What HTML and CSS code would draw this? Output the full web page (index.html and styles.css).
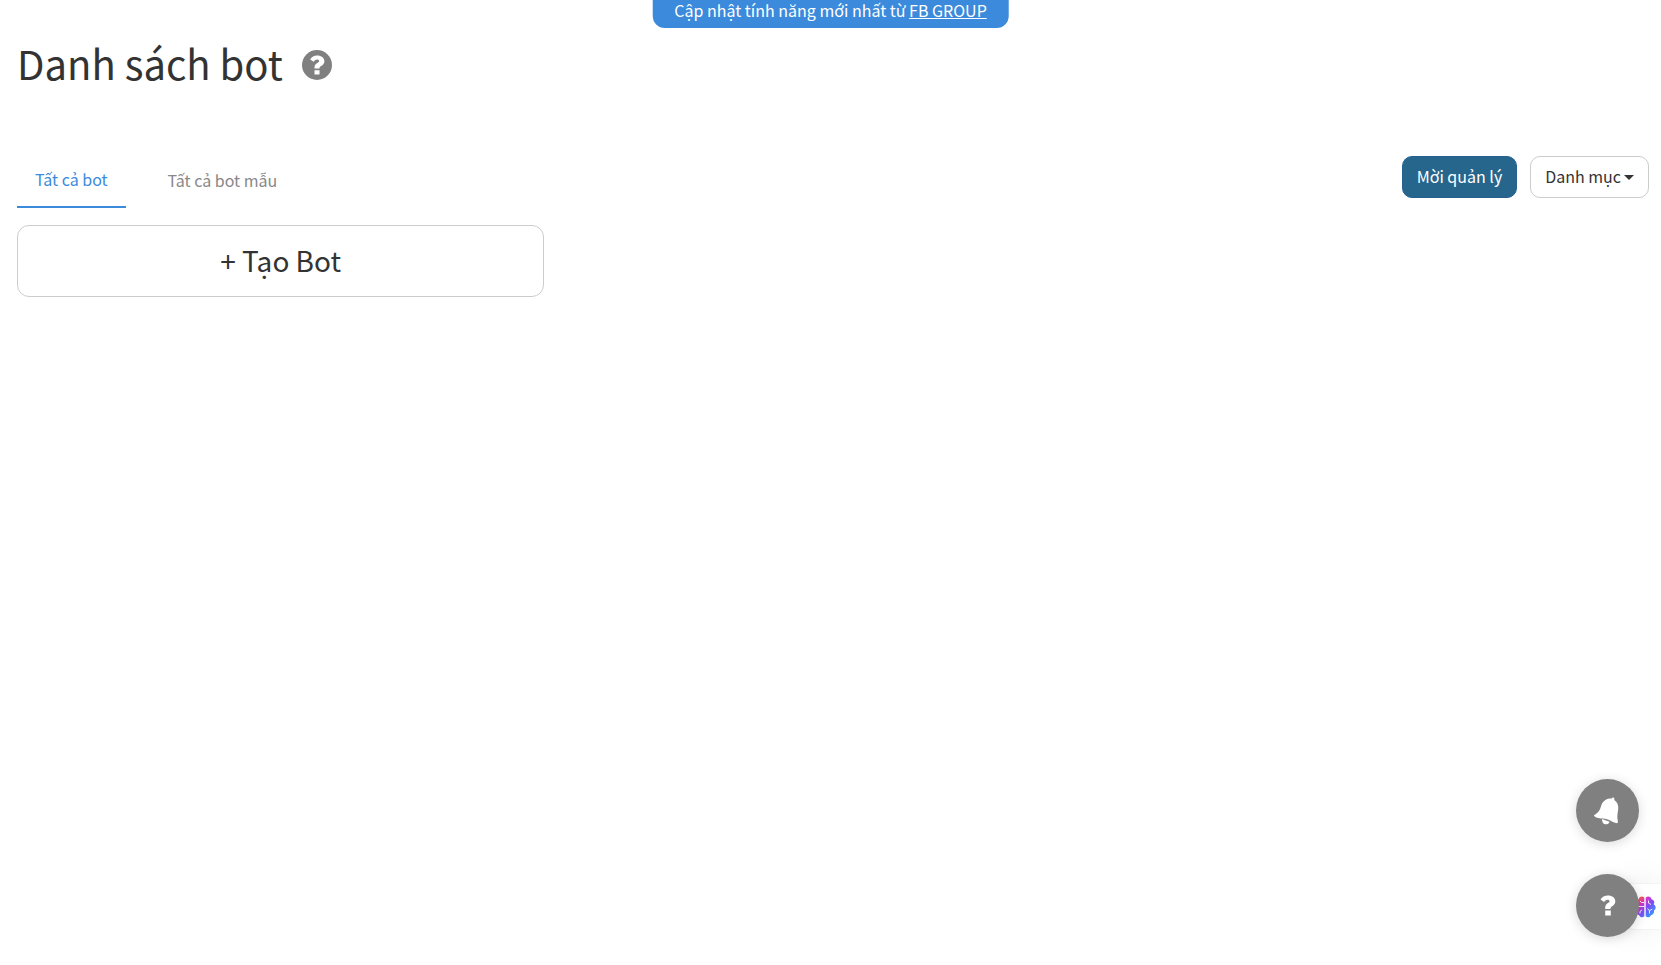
FILE: index.html
```
<!DOCTYPE html>
<html lang="vi">
<head>
<meta charset="utf-8">
<meta name="viewport" content="width=device-width, initial-scale=1">
<title>Danh sách bot</title>
<link rel="stylesheet" href="styles.css">
</head>
<body>
<div class="banner">Cập nhật tính năng mới nhất từ <a class="banner-link" href="#">FB GROUP</a></div>
<main class="page">
  <header class="heading">
    <h1 class="title">Danh sách bot</h1>
    <button class="help" type="button" aria-label="Trợ giúp">
      <svg viewBox="0 0 30 30" width="30" height="30"><circle cx="15" cy="15" r="15" fill="#808080"/><path d="M12.5 20.2h5v4.300h-5zM8.100 9.600C9.800 6.900 12 5.600 15.200 5.600c4 0 7.200 2.300 7.200 5.700 0 2.300-1.200 3.700-3.300 4.800-1.300.7-1.600 1.200-1.600 2.500h-5v-1c0-2.400 1-3.600 3-4.700 1.200-.7 1.700-1 1.700-1.800 0-.9-.9-1.500-2.100-1.500-1.500 0-2.300.7-3.300 2.100z" fill="#fff"/></svg>
    </button>
  </header>
  <div class="toolbar">
    <nav class="tabs">
      <a class="tab tab-active" href="#">Tất cả bot</a>
      <a class="tab" href="#">Tất cả bot mẫu</a>
    </nav>
    <div class="actions">
      <button class="btn btn-primary" type="button">Mời quản lý</button>
      <button class="btn" type="button">Danh mục<span class="caret"></span></button>
    </div>
  </div>
  <button class="create" type="button">+ Tạo Bot</button>
</main>
<button class="chip" type="button" aria-label="AI">
  <svg viewBox="0 0 22 22" width="22" height="22">
    <defs><linearGradient id="brain" gradientUnits="userSpaceOnUse" x1="2" y1="0" x2="20" y2="18"><stop offset="0" stop-color="#ff8a1a"/><stop offset=".2" stop-color="#f0506a"/><stop offset=".36" stop-color="#d836c8"/><stop offset=".62" stop-color="#7e4cf6"/><stop offset="1" stop-color="#2f9cff"/></linearGradient></defs>
    <path d="M10.300 1.500C8.200-.3 5 .6 4.700 3.200 2.200 3.700 1.200 6.200 2.500 8.200-.1 9.700 0 13.200 2.300 14.500c-.6 2.700 1 4.500 3 4.700.7 2.300 3.500 2.700 5 1zM11.700 1.500c2.100-1.800 5.500-.9 5.800 1.700 2.500.5 3.500 3 2.200 5 2.600 1.500 2.500 5 .2 6.300.6 2.700-1 4.500-3 4.700-.7 2.300-3.700 2.700-5.200 1z" fill="url(#brain)"/>
    <path d="M10.300 6.500H7.500L6 5M3 10.500h7.300M6 17.500v-2l2-1.500M14.500 4.500v2.500l2.500 1.500M13.500 12.500l2 2.300 2.700-1.800M15.500 14.800v2.700" fill="none" stroke="#fff" stroke-width=".9"/>
  </svg>
</button>
<div class="floating">
  <button class="round" type="button" aria-label="Thông báo">
    <svg viewBox="1 0 28 28" width="28" height="28"><g fill="#fff"><path d="M1 18.300c4.500-2.600 6-5.200 7-9C9.200 5 12.400 2 16.700 1.500h2.100c.2-1.400 2.600-1.300 2.600.6l-.2.800c3.200 2 4.500 5.400 4 9.300-.6 4.200-1.300 7.600-.5 11 .3 1.300.4 2.200-.6 3.100-3-.5-5.200-2-8-3.300-2.700-1.200-5.300-1.300-8.400-1.500C4.500 21.200 1.300 20.400 1 18.300z"/><path d="M9 22c-.4 2.800.9 5 3.300 5.300 2 .2 3.600-.7 4.200-2.600z"/></g><path d="M8.700 21.700c-.2 2.200.3 3.300 1.300 4.300" fill="none" stroke="#808080" stroke-width=".5"/></svg>
  </button>
  <button class="round" type="button" aria-label="Hỗ trợ">
    <svg viewBox="0 0 16 22" width="16" height="22"><path d="M5.200 15.500h5.600v5H5.200zM.5 4.500C2.200 1.800 4.600.4 8 .4c4.200 0 7.300 2.200 7.300 5.900 0 2.600-1.500 4-3.500 5.100-1.100.7-1.300 1.200-1.300 2.600H5.200v-.8c0-2.600.8-4 2.700-5.100 1.200-.7 1.700-1 1.700-1.800 0-.9-.8-1.500-2-1.500-1.500 0-2.400.8-3.500 2.300z" fill="#fff"/></svg>
  </button>
</div>
</body>
</html>
```
FILE: styles.css
```
* {
  box-sizing: border-box;
}

body {
  margin: 0;
  min-height: 100vh;
  background: #fff;
  color: #333;
  font-family: "Noto Sans CJK JP", "Noto Sans", sans-serif;
  font-size: 16px;
  line-height: 24px;
}

button {
  margin: 0;
  padding: 0;
  border: 0;
  background: none;
  color: inherit;
  font: inherit;
  cursor: pointer;
}

svg {
  display: block;
}

.banner {
  position: absolute;
  top: 0;
  left: 50%;
  transform: translateX(-50%);
  padding: 0 22px 8px;
  border-radius: 0 0 12px 12px;
  background: #3c8adb;
  color: #fff;
  line-height: 20px;
  white-space: nowrap;
}

.banner-link {
  color: inherit;
  text-decoration: underline;
}

.page {
  padding: 36px 12px 0 17px;
}

.heading {
  display: flex;
  align-items: center;
  gap: 19px;
}

.title {
  margin: 0;
  padding-bottom: 4px;
  font-size: 40px;
  font-weight: 400;
  line-height: 54px;
}

.toolbar {
  display: flex;
  justify-content: space-between;
  align-items: flex-start;
  margin-top: 62px;
}

.tabs {
  display: flex;
  gap: 24px;
}

.tab {
  padding: 12px 18px 15px;
  color: #888;
  text-decoration: none;
}

.tab-active {
  padding-top: 11px;
  border-bottom: 2px solid #3c8adb;
  color: #3c8adb;
}

.actions {
  display: flex;
  gap: 13px;
}

.btn {
  display: flex;
  align-items: center;
  height: 42px;
  padding: 0 14px 2px;
  border: 1px solid #ccc;
  border-radius: 10px;
  background: #fff;
}

.btn-primary {
  border-color: #286090;
  background: #27668c;
  color: #fff;
}

.caret {
  margin: 2px 0 0 3px;
  border: 5px solid transparent;
  border-top-color: #333;
  border-bottom: 0;
}

.create {
  display: block;
  width: calc((100% - 50px) / 3);
  min-width: 240px;
  height: 72px;
  margin-top: 17px;
  padding-bottom: 2px;
  border: 1px solid #ccc;
  border-radius: 12px;
  font-size: 28px;
}

.floating {
  position: fixed;
  right: 22px;
  bottom: 28px;
  display: grid;
  gap: 32px;
}

.round {
  display: grid;
  place-items: center;
  width: 63px;
  height: 63px;
  border-radius: 50%;
  background: #808080;
  box-shadow: 0 2px 12px rgba(0, 0, 0, 0.15);
}

.chip {
  position: fixed;
  right: 0;
  bottom: 36px;
  display: flex;
  align-items: center;
  justify-content: flex-end;
  width: 48px;
  height: 45px;
  padding-right: 5px;
  border-radius: 22px 0 0 22px;
  background: #fff;
  box-shadow: 0 0 32px rgba(0, 0, 0, 0.08), 0 0 2px rgba(0, 0, 0, 0.1);
}
```
